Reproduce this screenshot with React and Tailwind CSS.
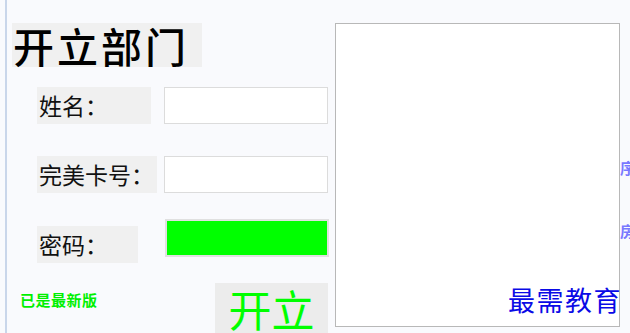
export default function App() {
  const cjk = { fontFamily: '"Noto Sans CJK SC", "Noto Sans", sans-serif' };
  return (
    <div className="w-[630px] h-[333px] bg-[#f9fafd] overflow-hidden relative flex" style={cjk}>
      <div className="w-[5px] shrink-0" />
      <div className="w-[2px] shrink-0 bg-[#c9d6ea]" />
      {/* left form column */}
      <div className="w-[328px] shrink-0 flex flex-col">
        <div className="shrink-0 mt-[23px] ml-[5px] w-[190px] h-[44px] bg-[#f0f0f0] flex items-center pl-[1px]">
          <span className="text-[41px] leading-none text-black font-medium tracking-[3px]">开立部门</span>
        </div>
        <div className="shrink-0 mt-[20px] flex items-start">
          <div className="ml-[30px] w-[114px] h-[37px] bg-[#f0f0f0] flex items-center pl-[2px] text-[23px] text-[#111] leading-none">姓名：</div>
          <div className="ml-[13px] w-[164px] h-[37px] bg-white border border-[#dcdcdc]" />
        </div>
        <div className="shrink-0 mt-[32px] flex items-start">
          <div className="ml-[30px] w-[120px] h-[37px] bg-[#f0f0f0] flex items-center pl-[2px] text-[23px] text-[#111] leading-none whitespace-nowrap">完美卡号：</div>
          <div className="ml-[7px] w-[164px] h-[37px] bg-white border border-[#dcdcdc]" />
        </div>
        <div className="shrink-0 mt-[26px] flex items-start">
          <div className="mt-[7px] ml-[30px] w-[101px] h-[37px] bg-[#f0f0f0] flex items-center pl-[2px] text-[23px] text-[#111] leading-none">密码：</div>
          <div className="ml-[27px] w-[164px] h-[38px] bg-[#00ff00] border-2 border-[#e0e0e0]" />
        </div>
        <div className="shrink-0 mt-[20px] flex items-start">
          <div className="mt-[5px] ml-[13px] w-[195px] text-[15px] font-bold text-[#00f000] leading-[24px] tracking-[0.5px]">已是最新版</div>
          <div className="w-[113px] h-[50px] bg-[#ececec] flex items-start justify-center pt-[4px]">
            <span className="text-[43px] leading-none text-[#00ff00]">开立</span>
          </div>
        </div>
      </div>
      {/* right box */}
      <div className="mt-[23px] w-[285px] h-[304px] shrink-0 bg-white border border-[#b8b8b8]" />
      <div className="flex flex-col shrink-0 text-[15px] font-bold text-[#7878ff] leading-none">
        <span className="mt-[160px]">序</span>
        <span className="mt-[48px]">房</span>
      </div>
      <div className="absolute left-[508px] top-[286px] text-[27px] leading-none text-[#0a0ae6] tracking-[1.5px] whitespace-nowrap">最需教育</div>
    </div>
  );
}
